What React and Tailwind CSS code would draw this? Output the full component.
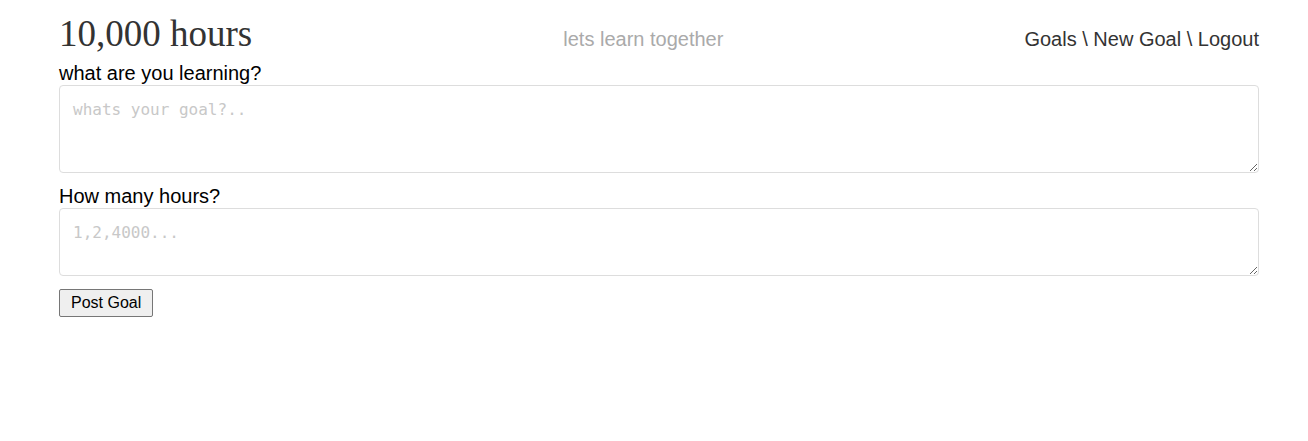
export default function App() {
  return (
    <div className="min-h-[441px] bg-white font-['Liberation_Sans',Arial,sans-serif]">
      <div className="w-[1200px] ml-[59px]">
        <header className="flex items-baseline justify-between pt-[12px] pb-[6px]">
          <h1 className="font-['Liberation_Serif','Times_New_Roman',serif] text-[37px] leading-[44px] text-[#333]">
            10,000 hours
          </h1>
          <span className="text-[20px] text-[#aaa] ml-[10px]">lets learn together</span>
          <nav className="text-[20px] text-[#333]">Goals \ New Goal \ Logout</nav>
        </header>

        <form className="flex flex-col items-start">
          <label htmlFor="goal" className="text-[20px] leading-[23px] text-black">
            what are you learning?
          </label>
          <textarea
            id="goal"
            placeholder="whats your goal?.."
            className="w-full h-[88px] border border-[#ddd] rounded-[4px] px-[13px] py-[12px] font-['DejaVu_Sans_Mono',monospace] text-[16px] placeholder:text-[#c8c8c8] outline-none"
          />
          <label htmlFor="hours" className="text-[20px] leading-[23px] text-black mt-[12px]">
            How many hours?
          </label>
          <textarea
            id="hours"
            placeholder="1,2,4000..."
            className="w-full h-[68px] border border-[#ddd] rounded-[4px] px-[13px] py-[12px] font-['DejaVu_Sans_Mono',monospace] text-[16px] placeholder:text-[#c8c8c8] outline-none"
          />
          <button
            type="button"
            className="mt-[13px] h-[28px] px-[11px] text-[16px] text-black bg-[#efefef] border border-[#767676] rounded-[2px]"
          >
            Post Goal
          </button>
        </form>
      </div>
    </div>
  )
}
